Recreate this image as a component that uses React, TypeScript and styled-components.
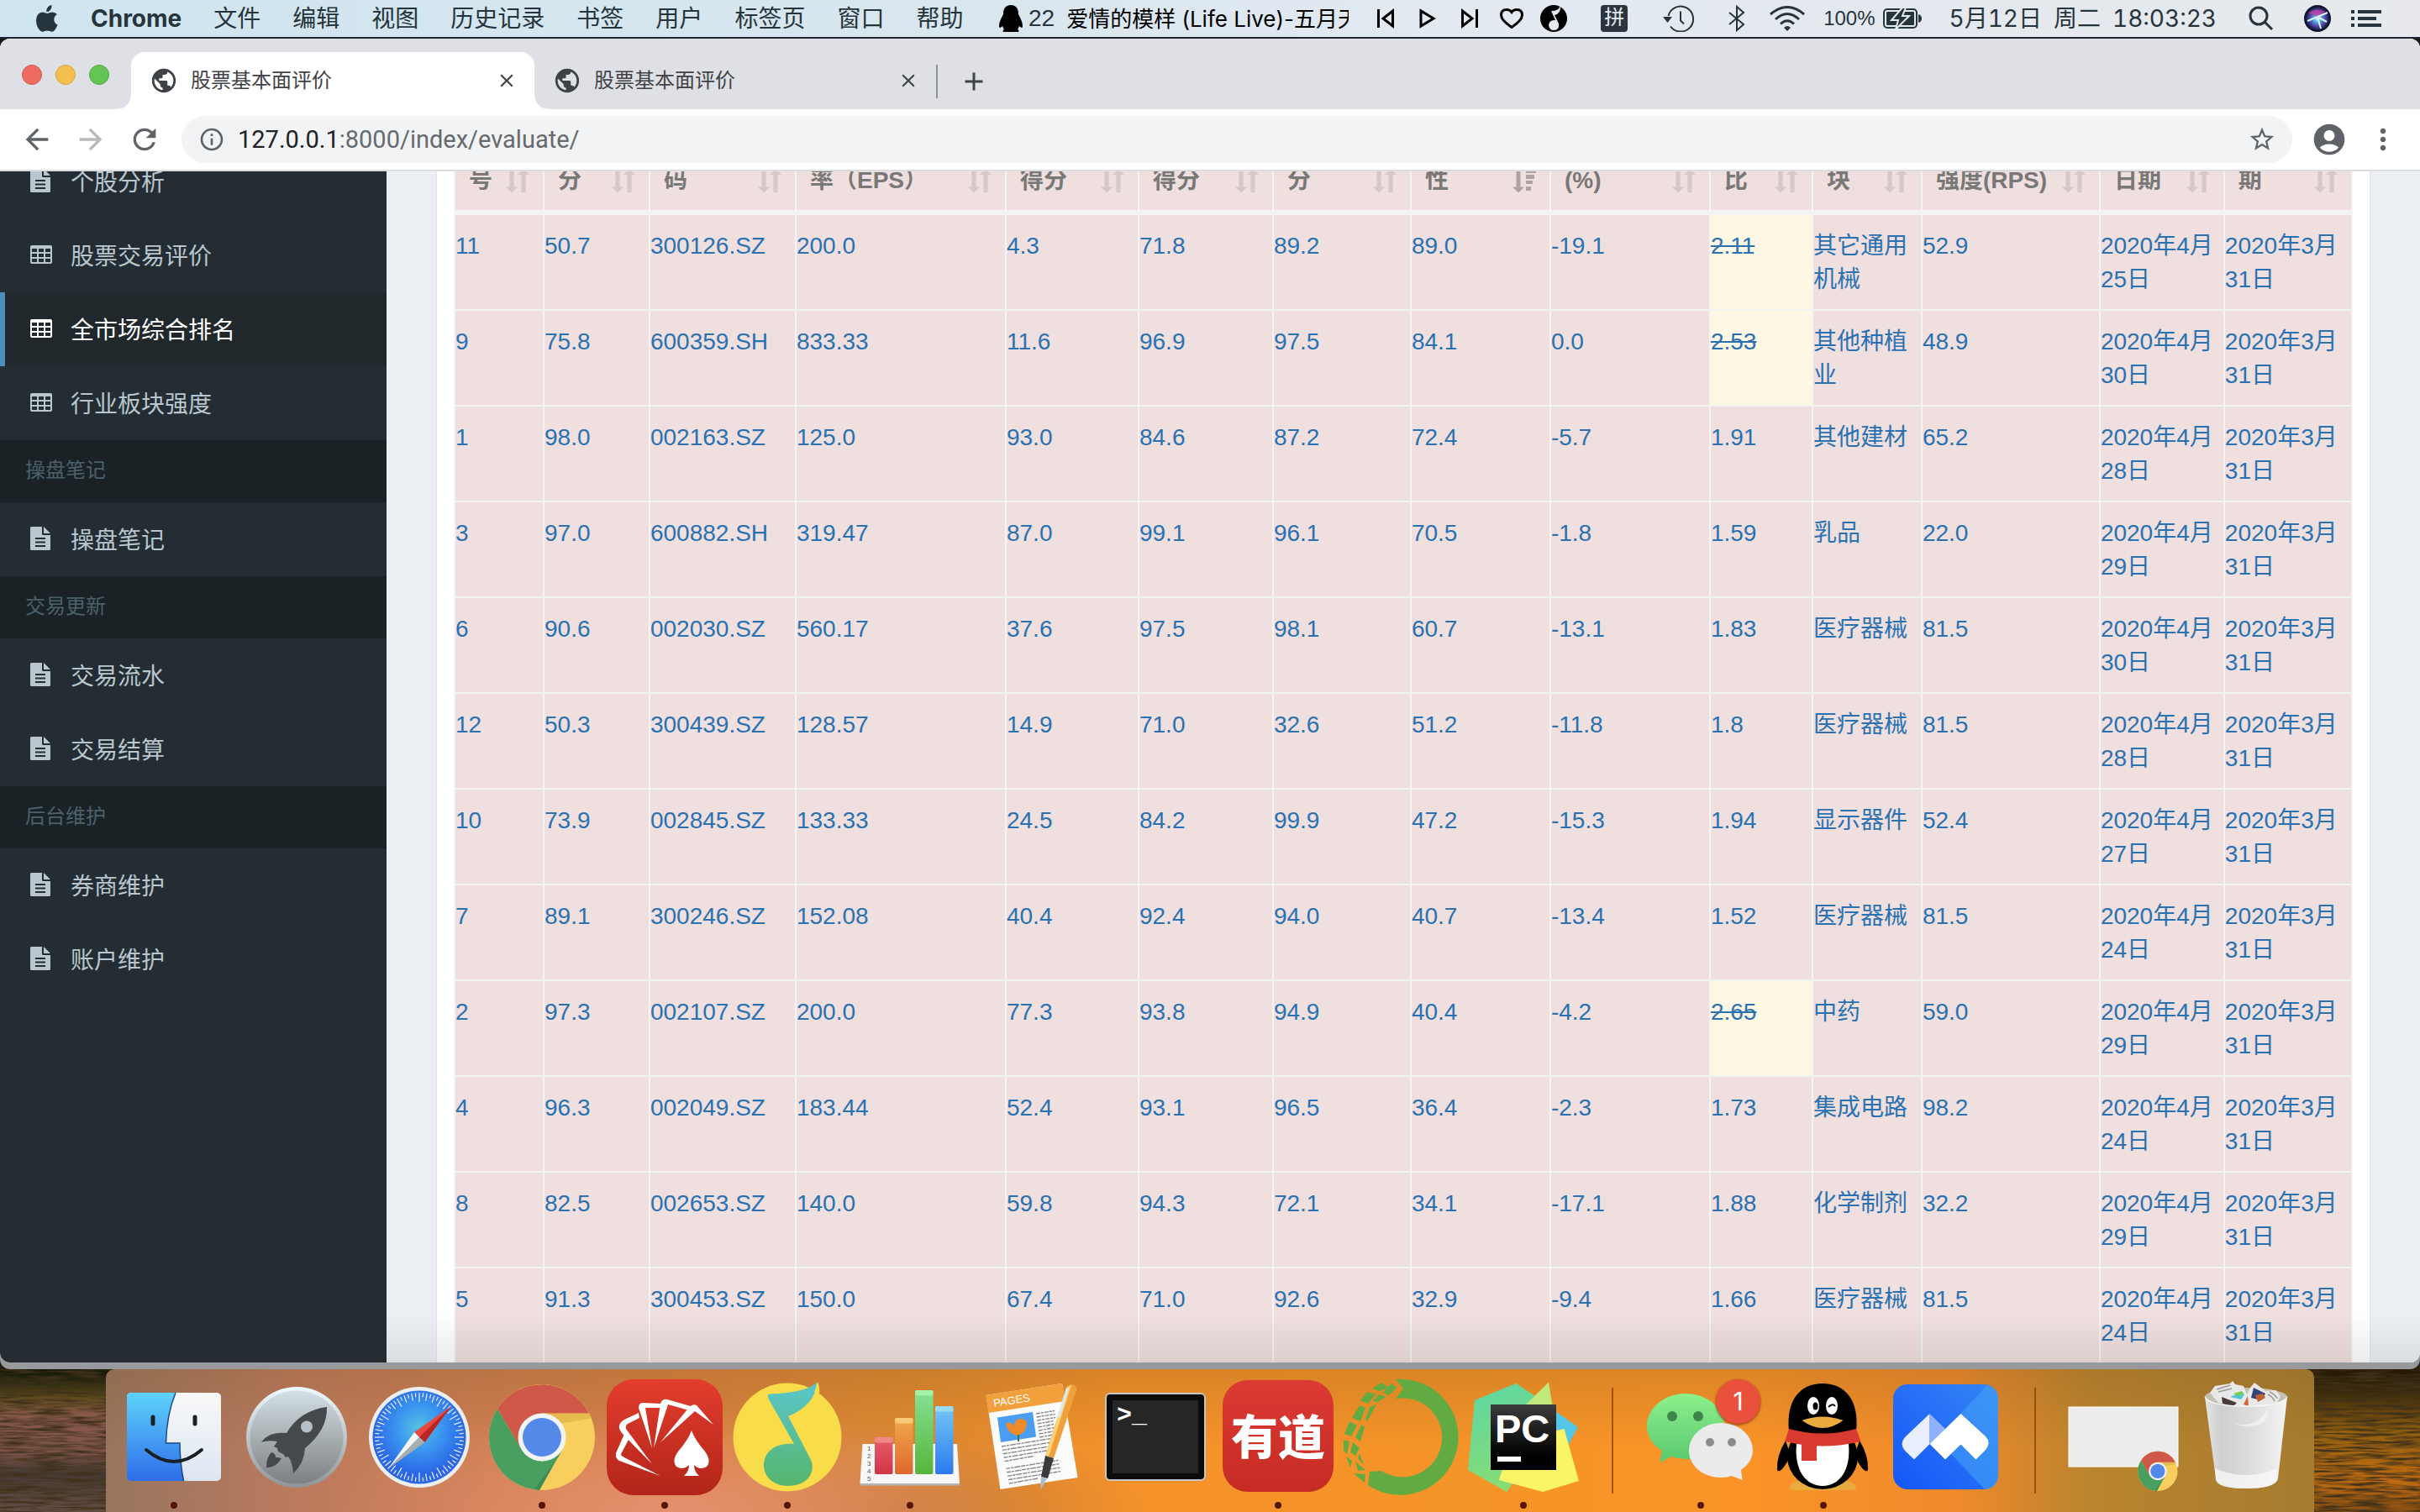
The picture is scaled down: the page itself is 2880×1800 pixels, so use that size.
import React from 'react';
import styled, { createGlobalStyle } from 'styled-components';
import {
  MdAccountCircle,
  MdAdd,
  MdArrowBack,
  MdArrowForward,
  MdClose,
  MdInfoOutline,
  MdMoreVert,
  MdPublic,
  MdRefresh,
  MdStarBorder,
} from 'react-icons/md';

const uiFont = `Inter, 'Noto Sans CJK SC', sans-serif`;
const pageFont = `'Liberation Sans', 'Noto Sans CJK SC', sans-serif`;

const GlobalStyle = createGlobalStyle`
  *, *::before, *::after { box-sizing: border-box; }
  body { margin: 0; font-family: ${pageFont}; }
  button { border: 0; padding: 0; background: none; font: inherit; color: inherit; }
  a { color: inherit; text-decoration: none; }
  svg { display: block; flex: none; }
`;

/* ---------- desktop ---------- */

const Desktop = styled.div`
  position: relative;
  display: flex;
  flex-direction: column;
  height: 100vh;
  overflow: hidden;
  background: #1d1712;
`;

const Wallpaper = styled.svg`
  position: absolute;
  inset: auto 0 0 0;
  width: 100%;
  height: 190px;
`;

/* ---------- menu bar ---------- */

const MenuBar = styled.header`
  position: relative;
  display: flex;
  align-items: center;
  flex: none;
  height: 46px;
  padding: 0 46px 0 42px;
  border-bottom: 2px solid #1c2530;
  background: linear-gradient(90deg, #cfe5ef, #d9e6ee 40%, #e2e9f1 60%, #e7e9ec);
  color: #26343c;
  font: 28px/44px ${uiFont};
  white-space: nowrap;
`;

const MenuList = styled.nav`
  display: flex;
  align-items: center;
  gap: 38px;
`;

const AppName = styled.button`
  font-weight: 700;
`;

const StatusArea = styled.div`
  display: flex;
  align-items: center;
  margin-left: auto;
`;

const StatusItem = styled.div<{ $gap: number }>`
  display: flex;
  align-items: center;
  margin-left: ${(p) => p.$gap}px;
`;

const SongTitle = styled.div`
  width: 336px;
  margin-left: 14px;
  padding-top: 2px;
  overflow: hidden;
  color: #000;
  font-size: 26px;
`;

const Count = styled.span`
  margin-left: 7px;
  font-family: ${pageFont};
`;

const Percent = styled.span`
  font-size: 24px;
  font-family: ${pageFont};
`;

const InputMethod = styled.span`
  width: 32px;
  height: 32px;
  border-radius: 4px;
  background: #2c343d;
  color: #e6ebf2;
  font-size: 24px;
  line-height: 30px;
  text-align: center;
`;

const Clock = styled.time`
  display: flex;
  gap: 14px;
  margin-left: 33px;
  font-variant-numeric: tabular-nums;
`;

/* ---------- browser window ---------- */

const WindowStack = styled.div`
  position: relative;
  display: flex;
  flex: 1;
  min-height: 0;
  padding-bottom: 8px;
  border-radius: 12px;
  background: #97999c;
`;

const BrowserWindow = styled.main`
  display: flex;
  flex-direction: column;
  flex: 1;
  min-width: 0;
  overflow: hidden;
  border-radius: 12px;
  background: #fff;
`;

const TabStrip = styled.div`
  display: flex;
  align-items: flex-end;
  flex: none;
  height: 84px;
  background: #dfe0e5;
`;

const TrafficLights = styled.div`
  display: flex;
  align-items: center;
  gap: 16px;
  width: 156px;
  height: 82px;
  padding-left: 26px;
`;

const Light = styled.button<{ $color: string; $edge: string }>`
  width: 24px;
  height: 24px;
  border: 1px solid ${(p) => p.$edge};
  border-radius: 50%;
  background: ${(p) => p.$color};
`;

const Tab = styled.div<{ $active?: boolean }>`
  position: relative;
  display: flex;
  align-items: center;
  width: ${(p) => (p.$active ? 480 : 478)}px;
  height: 68px;
  padding: 0 20px 0 22px;
  border-radius: 16px 16px 0 0;
  background: ${(p) => (p.$active ? '#fff' : 'transparent')};
  color: #3f4246;
  font: 24px/36px ${uiFont};

  &::before,
  &::after {
    content: ${(p) => (p.$active ? "''" : 'none')};
    position: absolute;
    bottom: 0;
    width: 16px;
    height: 16px;
  }
  &::before {
    right: 100%;
    background: radial-gradient(circle at 0 0, transparent 15px, #fff 16px);
  }
  &::after {
    left: 100%;
    background: radial-gradient(circle at 100% 0, transparent 15px, #fff 16px);
  }
`;

const TabTitle = styled.span`
  flex: 1;
  margin-left: 15px;
`;

const NewTab = styled.button`
  display: flex;
  align-items: center;
  height: 40px;
  margin-bottom: 13px;
  padding-left: 25px;
  border-left: 2px solid #8d9096;
  color: #3f4246;
`;

const Toolbar = styled.div`
  display: flex;
  align-items: center;
  flex: none;
  height: 74px;
  padding: 0 24px;
  border-bottom: 2px solid #dadce0;
  color: #5f6368;
`;

const ToolGroup = styled.div<{ $gap: number }>`
  display: flex;
  align-items: center;
  gap: ${(p) => p.$gap}px;
`;

const ToolButton = styled.button<{ $dim?: boolean }>`
  opacity: ${(p) => (p.$dim ? 0.45 : 1)};
`;

const Omnibox = styled.div`
  display: flex;
  align-items: center;
  flex: 1;
  height: 56px;
  margin: 0 22px 0 24px;
  padding: 0 19px 0 20px;
  border-radius: 28px;
  background: #f1f3f4;
`;

const Address = styled.a`
  flex: 1;
  margin-left: 15px;
  color: #66696d;
  font: 29px/40px Roboto, sans-serif;

  b {
    color: #202124;
    font-weight: 400;
  }
`;

const Page = styled.div`
  position: relative;
  display: flex;
  flex: 1;
  min-height: 0;
  overflow: hidden;
  background: #ecf0f5;

  &::after {
    content: '';
    position: absolute;
    inset: auto 0 0 0;
    height: 60px;
    background: linear-gradient(transparent, rgba(40, 35, 35, 0.09));
    pointer-events: none;
  }
`;

/* ---------- page sidebar ---------- */

const Sidebar = styled.aside`
  flex: none;
  width: 460px;
  background: #242d33;
`;

const SideNav = styled.nav`
  margin-top: -32px;
`;

const SideHeader = styled.div`
  padding: 16px 30px 18px;
  background: #1b2225;
  color: #4b616b;
  font-size: 24px;
  line-height: 40px;
`;

const SideLink = styled.a<{ $active?: boolean }>`
  display: flex;
  align-items: center;
  height: 88px;
  padding: 0 0 2px 30px;
  border-left: 6px solid ${(p) => (p.$active ? '#4b8fbd' : 'transparent')};
  background: ${(p) => (p.$active ? '#20282b' : 'transparent')};
  color: ${(p) => (p.$active ? '#fff' : '#b9c6cd')};
  font-size: 28px;
`;

const SideIcon = styled.span`
  width: 48px;
`;

/* ---------- ranking table ---------- */

const Content = styled.section`
  flex: 1;
  min-width: 0;
  padding: 0 60px;
`;

const Box = styled.div`
  padding: 0 20px;
  background: #fff;
  box-shadow: 0 0 2px rgba(0, 0, 0, 0.14);
`;

const Table = styled.table`
  width: 100%;
  margin-top: -10px;
  table-layout: fixed;
  border-spacing: 0;
  border-right: 2px solid #f4f4f4;
  font-size: 28px;
  line-height: 40px;
`;

const HeadCell = styled.th`
  padding: 1px 16px 15px;
  border-left: 2px solid #f4f4f4;
  border-bottom: 6px solid #f4f4f4;
  background: #efdfdf;
  color: #787876;
  text-align: left;
  white-space: nowrap;
`;

const HeadLabel = styled.div`
  display: flex;
  align-items: center;
  justify-content: space-between;
  height: 40px;
`;

const Cell = styled.td<{ $warn?: boolean }>`
  padding: 17px 0 15px;
  border-left: 2px solid #f4f4f4;
  border-bottom: 2px solid #f4f4f4;
  background: ${(p) => (p.$warn ? '#fdf7e4' : '#efdfdf')};
  color: #2a71b2;
  vertical-align: top;
`;

/* ---------- dock ---------- */

const DockArea = styled.footer`
  position: relative;
  display: flex;
  justify-content: center;
  flex: none;
  height: 170px;
`;

const DockShelf = styled.div`
  display: flex;
  padding: 0 8px;
  border-radius: 10px 10px 0 0;
  background:
    linear-gradient(rgba(120, 80, 30, 0.22), transparent 55%),
    radial-gradient(ellipse 420px 130px at 26% 100%, rgba(232, 146, 120, 0.85), transparent),
    radial-gradient(ellipse 300px 110px at 36% 100%, rgba(190, 120, 60, 0.7), transparent),
    linear-gradient(90deg, #98755f 0%, #bd7a5e 9%, #cf7f50 18%, #d9823e 27%, #e08a30 36%, #f5922a 46%, #f59428 62%, #fa9428 74%, #ee8a2c 84%, #b9842e 90%, #a67c30 100%);
`;

const DockItem = styled.button`
  position: relative;
  width: 146px;
  height: 170px;
`;

const RunningDot = styled.i`
  position: absolute;
  left: 69px;
  bottom: 4px;
  width: 8px;
  height: 8px;
  border-radius: 50%;
  background: #581404;
`;

const Badge = styled.span`
  position: absolute;
  top: 12px;
  left: 91px;
  width: 53px;
  height: 53px;
  border-radius: 50%;
  background: #e9513d;
  box-shadow: 0 1px 3px rgba(80, 20, 0, 0.7);
  color: #fff;
  font: 30px/53px ${uiFont};
  text-align: center;
`;

const DockDivider = styled.div`
  width: 2px;
  height: 126px;
  margin: 22px 31px 0 32px;
  background: rgba(140, 60, 0, 0.75);
`;

/* ---------- small drawings ---------- */

const FileIcon = () => (
  <svg width="24" height="28" viewBox="0 0 24 28" fill="currentColor">
    <path
      fillRule="evenodd"
      d="M1.500 0H14v8.500q0 1.500 1.500 1.500H24v16.500q0 1.500-1.500 1.500h-21Q0 28 0 26.500v-25Q0 0 1.500 0zM6 13v2h12v-2zM6 17.500v2h12v-2zM6 22v2h12v-2z"
    />
    <path d="M16 0l8 8h-8z" />
  </svg>
);

const GridIcon = () => (
  <svg width="26" height="22" viewBox="0 0 26 22" fill="currentColor">
    <path
      fillRule="evenodd"
      d="M2 0h22q2 0 2 2v18q0 2-2 2H2q-2 0-2-2V2Q0 0 2 0zM2 4v4h6V4zM10 4v4h6V4zM18 4v4h6V4zM2 10v4h6v-4zM10 10v4h6v-4zM18 10v4h6v-4zM2 16v4h6v-4zM10 16v4h6v-4zM18 16v4h6v-4z"
    />
  </svg>
);

const SortIcon = ({ active }: { active?: boolean }) => (
  <svg width="28" height="28" viewBox="0 0 28 28" fill="#333" opacity={active ? 0.34 : 0.13}>
    <path d="M4.500 0h5v21.500H14L7 28.500 0 21.500h4.500z" />
    {active ? (
      <path d="M16 1h13v4H16zM16 7h10v5H16zM16 14h8v4h-8zM16 21h6v5h-6z" />
    ) : (
      <path d="M18.500 28h5V7H28L21 0l-7 7h4.500z" />
    )}
  </svg>
);

/* ---------- dock drawings ---------- */

const Art = ({ children }: { children: React.ReactNode }) => (
  <svg width="146" height="170" viewBox="0 0 146 170">
    {children}
  </svg>
);

const ChromeShape = () => (
  <>
    <circle cx="73" cy="81" r="63" fill="#f8cf5e" />
    <path d="M20 47L48.500 95 73 110 97.500 95 70 144A63 63 0 0 1 20 47z" fill="#489f60" />
    <path d="M20 47L48.500 95 73 81V52.500H129A63 63 0 0 0 20 47z" fill="#cf5849" />
    <path d="M97 95L70 144l-6-1 29-39z" fill="#2e7a44" opacity=".5" />
    <path d="M73 52.500h56l2 6-35 6z" fill="#c59530" opacity=".35" />
    <circle cx="73" cy="81" r="28.500" fill="#f3f3f3" />
    <circle cx="73" cy="81" r="23" fill="#5489ea" />
  </>
);

const Finder = () => (
  <Art>
    <defs>
      <linearGradient id="fnA" x2="0" y2="1"><stop stopColor="#5ed3fa" /><stop offset="1" stopColor="#2f6dea" /></linearGradient>
      <linearGradient id="fnB" x2="0" y2="1"><stop stopColor="#f8f8f8" /><stop offset="1" stopColor="#dce6f2" /></linearGradient>
    </defs>
    <rect x="17" y="28" width="112" height="105" rx="5" fill="url(#fnB)" />
    <path d="M22 28H75C68 45 64 66 63.500 88H80C80 108 82 120 84.500 133H22q-5 0-5-5V33q0-5 5-5z" fill="url(#fnA)" />
    <path d="M75 28C68 45 64 66 63.500 88H80C80 108 82 120 84.500 133" fill="none" stroke="#1b4a80" strokeWidth="1.500" />
    <path d="M48 57v8M98 57v8" stroke="#1a2226" strokeWidth="5" strokeLinecap="round" />
    <path d="M40 96Q73 124 106 96" fill="none" stroke="#182026" strokeWidth="4" strokeLinecap="round" />
  </Art>
);

const Launchpad = () => (
  <Art>
    <defs>
      <linearGradient id="lp" x2="0" y2="1"><stop stopColor="#d3e0e5" /><stop offset="1" stopColor="#7d7f80" /></linearGradient>
      <linearGradient id="lpR" x2="0" y2="1"><stop stopColor="#eefaff" /><stop offset="1" stopColor="#8f9496" /></linearGradient>
    </defs>
    <circle cx="73" cy="81" r="60" fill="url(#lpR)" />
    <circle cx="73" cy="81" r="55.500" fill="url(#lp)" />
    <path d="M109 45Q110 72 83 94 82 112 69 124 68 110 63 104L60 105 57 101 51 98 50 94 46 92 50 86Q40 84 31 87 40 74 61 76 77 49 109 45z" fill="#45494b" />
    <path d="M43 99Q48 100 48 105 52 105 55 106 48 118 37 117 37 105 43 99z" fill="#45494b" />
    <circle cx="85" cy="68.500" r="7" fill="#b4c0c5" />
  </Art>
);

const Safari = () => (
  <Art>
    <defs>
      <radialGradient id="sf" cy=".4"><stop stopColor="#55c2e0" /><stop offset=".5" stopColor="#3a94f0" /><stop offset="1" stopColor="#2a66e6" /></radialGradient>
    </defs>
    <circle cx="73" cy="81" r="60" fill="#eceeef" />
    <circle cx="73" cy="81" r="55.500" fill="url(#sf)" />
    {Array.from({ length: 72 }, (_, i) => (
      <path
        key={i}
        d={i % 6 === 0 ? 'M73 28v11' : i % 2 === 0 ? 'M73 28v9' : 'M73 28v5'}
        stroke="#dfeaf8"
        strokeWidth="1.300"
        transform={`rotate(${i * 5} 73 81)`}
      />
    ))}
    <path d="M111 44L79.500 87 67 75z" fill="#e8483f" />
    <path d="M111 44L79.500 87 73 81z" fill="#b92820" />
    <path d="M36 118.500L67 75 73 81z" fill="#f5f5f5" />
    <path d="M36 118.500L79.500 87 73 81z" fill="#a9adb0" />
  </Art>
);

const Chrome = () => (
  <Art>
    <ChromeShape />
  </Art>
);

const Cards = () => (
  <Art>
    <defs>
      <linearGradient id="cd" x2="0" y2="1"><stop stopColor="#e33d2e" /><stop offset="1" stopColor="#b12518" /></linearGradient>
    </defs>
    <rect x="4" y="12" width="138" height="138" rx="32" fill="url(#cd)" />
    <g fill="#fff">
      <path d="M68 127L19 109Q14 106 15 100L25 77 30 84 21 101Q21 103 23 104z" />
      <path d="M58 113L23 77Q18 71 19 67 20 63 25 60L42 52 43 58 29 65Q26 67 27 71z" />
      <path d="M58 94L42 46Q42 41 46 40L69 41V46H50z" />
      <path d="M60 94L68 41Q70 35 76 36L104 44 102 49 77 42z" />
      <path d="M68 87L99 49Q105 40 111 43L131 66 109 50z" />
    </g>
    <path d="M105 73Q109 84 121 98 129 109 123 116 115 121 108 114 108 122 114 127H96Q102 122 102 114 95 121 87 116 81 109 89 98 101 84 105 73z" fill="#fff" />
  </Art>
);

const Music = () => (
  <Art>
    <defs>
      <linearGradient id="ms" x2="0" y2="1"><stop stopColor="#5ac6cb" /><stop offset="1" stopColor="#56b66e" /></linearGradient>
    </defs>
    <circle cx="73" cy="81" r="64.500" fill="#f9dc49" />
    <path d="M109 15Q96 28 52 29.500 48 30 51 36L81 89Q74 88 66 90C36 96 38 138 73 139C98 139 107 122 101 108L74 56Q106 43 109 15z" fill="url(#ms)" />
    <path d="M109 15Q112 22 111 29L105 28z" fill="#f9dc49" />
  </Art>
);

const bars: Array<[number, number, string, string, string]> = [
  [31, 81, '#e8606a', '#cf3347', '#ef8a88'],
  [55, 58, '#f0a94c', '#e0672d', '#f6c877'],
  [79, 25, '#86e294', '#56b53b', '#a6f0a8'],
  [103, 44, '#74c8f8', '#2d78ee', '#98dafa'],
];

const Numbers = () => (
  <Art>
    <path d="M16.500 89H129l3 47H13.500z" fill="#f7f7f7" />
    <path d="M13.500 136H132v2.500H13.500z" fill="#b5b5b5" />
    {[1, 2, 3, 4, 5].map((n) => (
      <text key={n} x="22" y={88 + n * 9} fontSize="8" fill="#555">{n}</text>
    ))}
    {bars.map(([x, y, from, to, cap]) => (
      <g key={x}>
        <defs>
          <linearGradient id={`bar${x}`} x2="0" y2="1"><stop stopColor={from} /><stop offset="1" stopColor={to} /></linearGradient>
        </defs>
        <rect x={x} y={y} width="21.500" height={125 - y} rx="2" fill={`url(#bar${x})`} />
        <rect x={x} y={y} width="21.500" height="6.500" rx="2" fill={cap} />
      </g>
    ))}
  </Art>
);

const Pages = () => (
  <Art>
    <path d="M17.500 31L108 17l18.500 112-92 14z" fill="#fbfbfb" />
    <path d="M17.500 31L108 17l3.500 21L20.500 52z" fill="#f2a03c" />
    <text x="27" y="45" fontSize="13" fill="#fff" fontFamily="Liberation Sans" transform="rotate(-9 27 45)">PAGES</text>
    <path d="M31 57.500L73 51l4 29.500L35 87z" fill="#4a9df0" />
    <path d="M41 65q6-4 9 3 2-10 10-9 6 2 6 4 0 12-9 15-3 1-6 0-8-3-10-13z" fill="#f08a28" />
    <path d="M56 78v8" stroke="#3c7a34" strokeWidth="2" />
    {[0, 1, 2, 3, 4, 5, 6, 7].map((i) => (
      <path key={i} d={`M${77 + i * 0.6} ${53 + i * 4}l${i < 3 ? 22 : 19}-3.500`} stroke="#888" strokeWidth="1.400" strokeDasharray="5 1 3 1" />
    ))}
    {[0, 1, 2, 3, 4, 6, 7, 8, 9, 10].map((i) => (
      <path key={i} d={`M${36 + i * 0.9} ${92 + i * 4.4}l${i === 4 || i === 10 ? 34 : 62}-${i === 4 || i === 10 ? 6 : 10}`} stroke="#888" strokeWidth="1.400" strokeDasharray="5 1 3 1 7 1" />
    ))}
    <path d="M114 21Q117 16 122 19 126 21 125 25L98 106 88 103z" fill="#f0a03a" />
    <path d="M119 19L92 104 88 103 114 21z" fill="#fbd277" />
    <path d="M113 22l3 1-11 35-3-1z" fill="#dce8f2" />
    <path d="M88 103l10 3-7 24-8-2z" fill="#3b3b3d" />
    <path d="M83 128l7 2-8 14z" fill="#a8bfd0" />
  </Art>
);

const Terminal = () => (
  <Art>
    <rect x="13" y="28" width="120" height="105" rx="6" fill="#c4c6c8" />
    <rect x="15" y="30" width="116" height="101" rx="4" fill="#0c0c0c" />
    <rect x="22" y="37" width="102" height="87" fill="#262626" />
    <text x="27" y="63" fontSize="30" fontWeight="700" fill="#fff" fontFamily="Liberation Mono">&gt;_</text>
  </Art>
);

const Youdao = () => (
  <Art>
    <defs>
      <linearGradient id="yd" x2="0" y2="1"><stop stopColor="#dc3a33" /><stop offset="1" stopColor="#c52b24" /></linearGradient>
    </defs>
    <rect x="7" y="13" width="132" height="133" rx="30" fill="url(#yd)" />
    <text x="73" y="101" fontSize="56" fontWeight="900" fill="#fff" textAnchor="middle" fontFamily="Noto Sans CJK SC">有道</text>
  </Art>
);

const Anaconda = () => (
  <Art>
    <path d="M67 12A69 69 0 1 1 34 138L36 122 50 121A47 47 0 1 0 67 35L76 23z" fill="#62ab42" />
    <path
      fill="#62ab42"
      d="M50 16L59 22 47 26 39 23zM62 17L68 22 59 31 52 28zM33 27L43 30 34 41 25 37zM47 30L56 33 45 39 40 38zM24 43L31 46 25 62 15 58zM36 45L44 42 33 62 31 60zM12 62L21 67 14 80 6 77zM26 67L30 68 25 86 19 81zM5 84L12 86 9 101 5 97zM16 87L24 94 19 103 13 99zM24 100L29 114 22 106zM8 104L15 109 13 117zM19 110L31 120 22 121zM17 124L31 125 30 135z"
    />
  </Art>
);

const PyCharm = () => (
  <Art>
    <defs>
      <linearGradient id="pc" x2=".3" y2="1"><stop stopColor="#5cd6a4" /><stop offset="1" stopColor="#86dd76" /></linearGradient>
      <linearGradient id="pk" x2="0" y2="1"><stop stopColor="#3c3c3c" /><stop offset=".8" stopColor="#000" /></linearGradient>
    </defs>
    <path d="M64 17L138 69 122 98 96 90z" fill="#55c6e8" />
    <path d="M15 37L64 17 90 34 100 80 53 146 7 120z" fill="url(#pc)" />
    <path d="M103 15.500L108 46H72z" fill="#bfe97a" />
    <path d="M121.500 71L139 133 96 146 44 132 50 112 108 74z" fill="#faf468" />
    <rect x="34" y="42" width="78" height="78" fill="url(#pk)" />
    <text x="39" y="87" fontSize="47" fontWeight="700" fill="#fff" fontFamily="Liberation Sans">PC</text>
    <rect x="42" y="104" width="28" height="6" fill="#fff" />
  </Art>
);

const WeChat = () => (
  <Art>
    <defs>
      <linearGradient id="wc" x2="0" y2="1"><stop stopColor="#8df08c" /><stop offset="1" stopColor="#5bc870" /></linearGradient>
    </defs>
    <path d="M55 29C80 29 101 46 101 68S80 107 55 107Q46 107 38 104L24 111 27 97Q9 86 9 68C9 46 30 29 55 29z" fill="url(#wc)" />
    <circle cx="39" cy="56" r="6" fill="#3d8549" />
    <circle cx="70" cy="56" r="6" fill="#3d8549" />
    <path d="M97 64C118 64 135 78 135 97Q135 110 121 120L122.500 132 110 127Q104 129 97 129C76 129 59 115 59 97S76 64 97 64z" fill="#ebebeb" />
    <circle cx="84" cy="87" r="5" fill="#8b8b8b" />
    <circle cx="110" cy="87" r="5" fill="#8b8b8b" />
  </Art>
);

const QQ = () => (
  <Art>
    <path d="M32 142Q33 132 52 132H92Q111 132 112 142 112 144 100 144H44Q32 144 32 142z" fill="#eaab3e" />
    <path d="M28 85Q17 103 18 120 22 126 34 103zM116 85Q127 103 126 120 122 126 110 103z" fill="#000" />
    <ellipse cx="72" cy="104" rx="42" ry="39" fill="#000" />
    <path d="M32 74C28 36 46 17 72 17s44 19 40 57z" fill="#000" />
    <path d="M41 89H103C106 120 92 139 72 139S38 120 41 89z" fill="#fff" />
    <path d="M32 71Q72 82 112 71L117.500 86Q72 97 27 86z" fill="#d83a30" />
    <path d="M47 88H65V109H47z" fill="#d83a30" />
    <ellipse cx="61" cy="43.500" rx="7" ry="10.500" fill="#fff" />
    <ellipse cx="83" cy="43.500" rx="7" ry="10.500" fill="#fff" />
    <ellipse cx="63.500" cy="44" rx="3" ry="4.500" fill="#000" />
    <path d="M79 45q5-5 8-1" fill="none" stroke="#000" strokeWidth="2" />
    <path d="M47.500 61Q72 52 96.500 61 84 70 72 70T47.500 61z" fill="#eaab3e" />
  </Art>
);

const Meeting = () => (
  <Art>
    <defs>
      <linearGradient id="mt" x1="0" y1="1" x2="1" y2="0"><stop stopColor="#1456f8" /><stop offset="1" stopColor="#3585f5" /></linearGradient>
    </defs>
    <rect x="10" y="18" width="125" height="125" rx="17" fill="url(#mt)" />
    <path d="M122 19q13 3 13 17v90q0 16-16 17L70 92 90 53z" fill="#46a4f5" opacity=".55" />
    <path d="M53.500 53V89L35 107.500 24 97Q17 89 24 81z" fill="#e8eefd" />
    <path d="M53.500 53L72 71 53.500 89z" fill="#8fb0fa" />
    <path d="M90.500 53L120 80Q127 87 120 96L108.500 107.500 90.500 89.500 72 107.500 53.500 89z" fill="#fff" />
  </Art>
);

const MinimizedWindow = () => (
  <Art>
    <rect x="8" y="45" width="130" height="71" fill="#ececec" stroke="#fff" />
    <g transform="translate(86.500 91) scale(.375)">
      <ChromeShape />
    </g>
  </Art>
);

const Trash = () => (
  <Art>
    <defs>
      <linearGradient id="ts"><stop stopColor="#e6e6e6" /><stop offset=".2" stopColor="#cfcfcf" /><stop offset=".6" stopColor="#dedede" /><stop offset="1" stopColor="#f4f4f4" /></linearGradient>
    </defs>
    <ellipse cx="73" cy="33" rx="49" ry="11" fill="#c5c0b4" />
    <path d="M30 28L36 20 54 17 57 14 60 18 70 20 74 30 78 22 83 16 96 26 108 25 114 32 110 40 88 44 60 43 40 40z" fill="#e8e8e6" />
    <path d="M54 33l14-6 3 3-4 6z" fill="#57c4d8" />
    <path d="M58 29l10-3 2 3-6 3z" fill="#72d04a" />
    <path d="M82 22l14 7-5 8-12-3z" fill="#34437c" />
    <path d="M84 31l9-2 3 5-9 5z" fill="#c3622e" />
    <path d="M44 33l18 7-4 4-13-3z" fill="#4a3a38" />
    <path d="M38 24l16-5M40 27l16-4M99 30q5 2 8 8M101 27q7 3 9 8" stroke="#999" strokeWidth="1.500" fill="none" />
    <path d="M70 42l5-10 1 12z" fill="#d8623c" />
    <path d="M24 33Q30 44 73 44T122 33L111 130Q109 142 73 142T37 130z" fill="url(#ts)" />
    <path d="M24 33Q30 44 73 44T122 33" fill="none" stroke="#fafafa" strokeWidth="1.500" />
    <path d="M58 64Q84 72 98 48 102 62 86 67 70 70 58 64z" fill="#f2f2f2" opacity=".8" />
    <path d="M36 118Q73 134 110 118L109 132Q106 142 73 142T37 132z" fill="#fafafa" opacity=".75" />
  </Art>
);

type DockApp = { name: string; art: React.ComponentType; running?: boolean; badge?: number };

const dockApps: DockApp[] = [
  { name: 'Finder', art: Finder, running: true },
  { name: 'Launchpad', art: Launchpad },
  { name: 'Safari', art: Safari },
  { name: 'Chrome', art: Chrome, running: true },
  { name: 'Cards', art: Cards, running: true },
  { name: 'Music', art: Music, running: true },
  { name: 'Numbers', art: Numbers, running: true },
  { name: 'Pages', art: Pages },
  { name: 'Terminal', art: Terminal },
  { name: 'Youdao', art: Youdao, running: true },
  { name: 'Anaconda', art: Anaconda },
  { name: 'PyCharm', art: PyCharm, running: true },
];
const recentApps: DockApp[] = [
  { name: 'WeChat', art: WeChat, running: true, badge: 1 },
  { name: 'QQ', art: QQ, running: true },
  { name: 'Meeting', art: Meeting },
];
const dockEnd: DockApp[] = [
  { name: 'Minimized window', art: MinimizedWindow },
  { name: 'Trash', art: Trash },
];

const DockGroup = ({ apps }: { apps: DockApp[] }) => (
  <>
    {apps.map(({ name, art: Drawing, running, badge }) => (
      <DockItem key={name} aria-label={name}>
        <Drawing />
        {badge && <Badge>{badge}</Badge>}
        {running && <RunningDot />}
      </DockItem>
    ))}
  </>
);

/* ---------- data ---------- */

const menus = ['文件', '编辑', '视图', '历史记录', '书签', '用户', '标签页', '窗口', '帮助'];

type NavEntry = { label: string; kind: 'header' | 'file' | 'grid'; active?: boolean };

const navEntries: NavEntry[] = [
  { label: '个股分析', kind: 'file' },
  { label: '股票交易评价', kind: 'grid' },
  { label: '全市场综合排名', kind: 'grid', active: true },
  { label: '行业板块强度', kind: 'grid' },
  { label: '操盘笔记', kind: 'header' },
  { label: '操盘笔记', kind: 'file' },
  { label: '交易更新', kind: 'header' },
  { label: '交易流水', kind: 'file' },
  { label: '交易结算', kind: 'file' },
  { label: '后台维护', kind: 'header' },
  { label: '券商维护', kind: 'file' },
  { label: '账户维护', kind: 'file' },
];

const columns: Array<[string, number]> = [
  ['号', 106],
  ['分', 126],
  ['码', 174],
  ['率（EPS）', 250],
  ['得分', 158],
  ['得分', 160],
  ['分', 164],
  ['性', 166],
  ['(%)', 190],
  ['比', 122],
  ['块', 130],
  ['强度(RPS)', 212],
  ['日期', 148],
  ['期', 152],
];
const TOTAL_WIDTH = columns.reduce((sum, [, width]) => sum + width, 0);
const SORTED_COLUMN = 7;
const RATIO_COLUMN = 9;

const rows: string[][] = [
  ['11', '50.7', '300126.SZ', '200.0', '4.3', '71.8', '89.2', '89.0', '-19.1', '2.11', '其它通用机械', '52.9', '2020年4月25日', '2020年3月31日'],
  ['9', '75.8', '600359.SH', '833.33', '11.6', '96.9', '97.5', '84.1', '0.0', '2.53', '其他种植业', '48.9', '2020年4月30日', '2020年3月31日'],
  ['1', '98.0', '002163.SZ', '125.0', '93.0', '84.6', '87.2', '72.4', '-5.7', '1.91', '其他建材', '65.2', '2020年4月28日', '2020年3月31日'],
  ['3', '97.0', '600882.SH', '319.47', '87.0', '99.1', '96.1', '70.5', '-1.8', '1.59', '乳品', '22.0', '2020年4月29日', '2020年3月31日'],
  ['6', '90.6', '002030.SZ', '560.17', '37.6', '97.5', '98.1', '60.7', '-13.1', '1.83', '医疗器械', '81.5', '2020年4月30日', '2020年3月31日'],
  ['12', '50.3', '300439.SZ', '128.57', '14.9', '71.0', '32.6', '51.2', '-11.8', '1.8', '医疗器械', '81.5', '2020年4月28日', '2020年3月31日'],
  ['10', '73.9', '002845.SZ', '133.33', '24.5', '84.2', '99.9', '47.2', '-15.3', '1.94', '显示器件', '52.4', '2020年4月27日', '2020年3月31日'],
  ['7', '89.1', '300246.SZ', '152.08', '40.4', '92.4', '94.0', '40.7', '-13.4', '1.52', '医疗器械', '81.5', '2020年4月24日', '2020年3月31日'],
  ['2', '97.3', '002107.SZ', '200.0', '77.3', '93.8', '94.9', '40.4', '-4.2', '2.65', '中药', '59.0', '2020年4月29日', '2020年3月31日'],
  ['4', '96.3', '002049.SZ', '183.44', '52.4', '93.1', '96.5', '36.4', '-2.3', '1.73', '集成电路', '98.2', '2020年4月24日', '2020年3月31日'],
  ['8', '82.5', '002653.SZ', '140.0', '59.8', '94.3', '72.1', '34.1', '-17.1', '1.88', '化学制剂', '32.2', '2020年4月29日', '2020年3月31日'],
  ['5', '91.3', '300453.SZ', '150.0', '67.4', '71.0', '92.6', '32.9', '-9.4', '1.66', '医疗器械', '81.5', '2020年4月24日', '2020年3月31日'],
];

/* ---------- assembled parts ---------- */

const SystemBar = () => (
  <MenuBar>
    <MenuList>
      <svg width="28" height="32" viewBox="0 0 28 32" fill="currentColor">
        <path d="M19.500 0q.5 3.500-1.600 5.900-2 2.300-4.700 2.200-.3-3 1.700-5.500Q16.800.3 19.500 0zM26 11q-3.700 2.400-3.700 6.300 0 4.500 4.200 6.300-1 3-2.900 5.600-1.800 2.600-3.900 2.600-1 0-2.600-.7t-3-.7q-1.300 0-2.900.7T8.800 32q-2.300 0-4.300-2.900Q1 24.300 1 18.200q0-4.600 2.300-7.200T8.700 8.500q1.300 0 3.100.8t2.400.8q.5 0 2.400-.8 2-.8 3.600-.8 3.700.1 5.800 2.500z" />
      </svg>
      <AppName>Chrome</AppName>
      {menus.map((m) => (
        <button key={m}>{m}</button>
      ))}
    </MenuList>
    <StatusArea>
      <svg width="28" height="32" viewBox="0 0 28 32" fill="#000">
        <path d="M14 0c7 0 9 5 9 11 2 4 5 9 5 14 0 3-2 2-4 0-1 2-1 3-2 4 2 1 2 3 0 3H6c-2 0-2-2 0-3-1-1-1-2-2-4-2 2-4 3-4 0 0-5 3-10 5-14C5 5 7 0 14 0z" />
      </svg>
      <Count>22</Count>
      <SongTitle>爱情的模样 (Life Live)-五月天</SongTitle>
      <StatusItem $gap={34}>
        <svg width="20" height="24" viewBox="0 0 20 24" fill="none" stroke="#000" strokeWidth="3">
          <path d="M1.500 1v22M18.500 3v18L7 12z" />
        </svg>
      </StatusItem>
      <StatusItem $gap={30}>
        <svg width="20" height="24" viewBox="0 0 20 24" fill="none" stroke="#000" strokeWidth="3">
          <path d="M2 3v18l15-9z" />
        </svg>
      </StatusItem>
      <StatusItem $gap={30}>
        <svg width="20" height="24" viewBox="0 0 20 24" fill="none" stroke="#000" strokeWidth="3">
          <path d="M18.500 1v22M1.500 3v18L13 12z" />
        </svg>
      </StatusItem>
      <StatusItem $gap={26}>
        <svg width="28" height="24" viewBox="0 0 28 24" fill="none" stroke="#000" strokeWidth="3">
          <path d="M14 22.500Q1.500 14 1.500 8 1.500 1.500 8 1.500 12 1.500 14 4.500 16 1.500 20 1.500 26.500 1.500 26.500 8 26.500 14 14 22.500z" />
        </svg>
      </StatusItem>
      <StatusItem $gap={20}>
        <svg width="32" height="32" viewBox="0 0 32 32">
          <circle cx="16" cy="16" r="16" fill="#000" />
          <path d="M24 1Q22 7 13 7L18 18Q11 17 10 24 11 30 16 30 23 30 22 22L17 12Q25 10 24 1z" fill="#e2e8f0" />
        </svg>
      </StatusItem>
      <StatusItem $gap={40}>
        <InputMethod>拼</InputMethod>
      </StatusItem>
      <StatusItem $gap={42}>
        <svg width="38" height="32" viewBox="0 0 38 32" fill="none" stroke="currentColor" strokeWidth="2">
          <path d="M6.500 13A15 15 0 1 1 9 25.500M21 7.500v11l4 4" />
          <path d="M0 14h11l-5.500 7z" fill="currentColor" stroke="none" />
        </svg>
      </StatusItem>
      <StatusItem $gap={40}>
        <svg width="20" height="32" viewBox="0 0 20 32" fill="none" stroke="currentColor" strokeWidth="2">
          <path d="M1 9l17 14-8 7V2l8 7L1 23" />
        </svg>
      </StatusItem>
      <StatusItem $gap={29}>
        <svg width="42" height="30" viewBox="0 0 42 30" fill="none" stroke="currentColor" strokeWidth="3">
          <path d="M1 10Q21-7 41 10M7 16Q21 3 35 16M13 21.500Q21 14 29 21.500" />
          <path d="M17 26Q21 22 25 26L21 30z" fill="currentColor" stroke="none" />
        </svg>
      </StatusItem>
      <StatusItem $gap={22}>
        <Percent>100%</Percent>
      </StatusItem>
      <StatusItem $gap={9}>
        <svg width="46" height="26" viewBox="0 0 46 26">
          <rect x="1" y="2" width="39" height="22" rx="4" fill="none" stroke="currentColor" strokeWidth="2" />
          <rect x="4" y="5" width="33" height="16" rx="1" fill="currentColor" />
          <path d="M42 8q4 1 4 5t-4 5z" fill="currentColor" />
          <path d="M23 0L10 15h8l-3 11L31 10h-8l4-10z" fill="currentColor" stroke="#e4e9ef" strokeWidth="2" />
        </svg>
      </StatusItem>
      <Clock>
        <span>5月12日</span>
        <span>周二</span>
        <span>18:03:23</span>
      </Clock>
      <StatusItem $gap={38}>
        <svg width="30" height="30" viewBox="0 0 30 30" fill="none" stroke="currentColor" strokeWidth="3">
          <circle cx="12" cy="12" r="10" />
          <path d="M19 19l9 9" />
        </svg>
      </StatusItem>
      <StatusItem $gap={36}>
        <svg width="32" height="32" viewBox="0 0 32 32">
          <defs>
            <radialGradient id="siri"><stop stopColor="#fff" /><stop offset=".3" stopColor="#4bb4e6" /><stop offset=".65" stopColor="#5a48b0" /><stop offset="1" stopColor="#131a3c" /></radialGradient>
          </defs>
          <circle cx="16" cy="16" r="16" fill="#10152e" />
          <circle cx="16" cy="16" r="14" fill="url(#siri)" />
          <path d="M5 10Q14 2 25 8 18 12 16 16 12 10 5 10z" fill="#c53f9c" opacity=".75" />
          <path d="M4 19L16 14 28 9M16 14l4 14M16 14l11 6" stroke="#d8f4ff" strokeWidth="2" fill="none" />
        </svg>
      </StatusItem>
      <StatusItem $gap={24}>
        <svg width="36" height="20" viewBox="0 0 36 20" fill="currentColor">
          <path d="M0 0h4v4H0zM8 0h28v4H8zM0 8h4v4H0zM8 8h22v4H8zM0 16h4v4H0zM8 16h28v4H8z" />
        </svg>
      </StatusItem>
    </StatusArea>
  </MenuBar>
);

const BrowserTab = ({ title, active }: { title: string; active?: boolean }) => (
  <Tab $active={active}>
    <MdPublic size={34} />
    <TabTitle>{title}</TabTitle>
    <button aria-label="关闭">
      <MdClose size={26} />
    </button>
  </Tab>
);

const SidebarMenu = () => (
  <Sidebar>
    <SideNav>
      {navEntries.map((e, i) =>
        e.kind === 'header' ? (
          <SideHeader key={i}>{e.label}</SideHeader>
        ) : (
          <SideLink key={i} href="#" $active={e.active}>
            <SideIcon>{e.kind === 'file' ? <FileIcon /> : <GridIcon />}</SideIcon>
            {e.label}
          </SideLink>
        ),
      )}
    </SideNav>
  </Sidebar>
);

const RankingTable = () => (
  <Table>
    <colgroup>
      {columns.map(([, width], i) => (
        <col key={i} style={{ width: `${(width / TOTAL_WIDTH) * 100}%` }} />
      ))}
    </colgroup>
    <thead>
      <tr>
        {columns.map(([label], i) => (
          <HeadCell key={i}>
            <HeadLabel>
              {label}
              <SortIcon active={i === SORTED_COLUMN} />
            </HeadLabel>
          </HeadCell>
        ))}
      </tr>
    </thead>
    <tbody>
      {rows.map((row) => (
        <tr key={row[0]}>
          {row.map((value, i) => {
            const warn = i === RATIO_COLUMN && Number(value) > 2;
            return (
              <Cell key={i} $warn={warn}>
                <a href="#">{warn ? <del>{value}</del> : value}</a>
              </Cell>
            );
          })}
        </tr>
      ))}
    </tbody>
  </Table>
);

const DesktopPicture = () => (
  <Wallpaper preserveAspectRatio="none" viewBox="0 0 2880 190">
    <defs>
      <linearGradient id="wpL" x2="0" y2="1">
        <stop stopColor="#0c0d06" />
        <stop offset=".16" stopColor="#1c200a" />
        <stop offset=".28" stopColor="#5c4a1c" />
        <stop offset=".4" stopColor="#8a5a4c" />
        <stop offset=".62" stopColor="#7c5348" />
        <stop offset=".76" stopColor="#463a34" />
        <stop offset="1" stopColor="#664e46" />
      </linearGradient>
      <linearGradient id="wpR" x2="0" y2="1">
        <stop stopColor="#120c04" />
        <stop offset=".25" stopColor="#3c2a0a" />
        <stop offset=".5" stopColor="#93600f" />
        <stop offset=".8" stopColor="#c06c12" />
        <stop offset="1" stopColor="#8a4f12" />
      </linearGradient>
      <filter id="ripples" x="0" y="0" width="100%" height="100%">
        <feTurbulence type="fractalNoise" baseFrequency="0.025 0.32" numOctaves="3" seed="4" />
        <feColorMatrix values="0 0 0 0 0.05  0 0 0 0 0.03  0 0 0 0 0.01  2.6 0 0 0 -0.95" />
      </filter>
    </defs>
    <rect width="1440" height="190" fill="url(#wpL)" />
    <rect x="1440" width="1440" height="190" fill="url(#wpR)" />
    <rect width="200" height="190" filter="url(#ripples)" />
    <rect x="2700" width="180" height="190" filter="url(#ripples)" />
  </Wallpaper>
);

export default function App() {
  return (
    <Desktop>
      <GlobalStyle />
      <DesktopPicture />
      <SystemBar />
      <WindowStack>
        <BrowserWindow>
          <TabStrip>
            <TrafficLights>
              <Light $color="#ee6b60" $edge="#d5574d" aria-label="关闭窗口" />
              <Light $color="#f5bf4f" $edge="#d9a33c" aria-label="最小化" />
              <Light $color="#62c554" $edge="#4fa943" aria-label="缩放" />
            </TrafficLights>
            <BrowserTab title="股票基本面评价" active />
            <BrowserTab title="股票基本面评价" />
            <NewTab aria-label="新标签页">
              <MdAdd size={36} />
            </NewTab>
          </TabStrip>
          <Toolbar>
            <ToolGroup $gap={24}>
              <ToolButton aria-label="后退"><MdArrowBack size={40} /></ToolButton>
              <ToolButton aria-label="前进" $dim><MdArrowForward size={40} /></ToolButton>
              <ToolButton aria-label="刷新"><MdRefresh size={40} /></ToolButton>
            </ToolGroup>
            <Omnibox>
              <MdInfoOutline size={32} />
              <Address href="#">
                <b>127.0.0.1</b>:8000/index/evaluate/
              </Address>
              <MdStarBorder size={34} />
            </Omnibox>
            <ToolGroup $gap={22}>
              <ToolButton aria-label="用户"><MdAccountCircle size={44} /></ToolButton>
              <ToolButton aria-label="更多"><MdMoreVert size={40} /></ToolButton>
            </ToolGroup>
          </Toolbar>
          <Page>
            <SidebarMenu />
            <Content>
              <Box>
                <RankingTable />
              </Box>
            </Content>
          </Page>
        </BrowserWindow>
      </WindowStack>
      <DockArea>
        <DockShelf>
          <DockGroup apps={dockApps} />
          <DockDivider />
          <DockGroup apps={recentApps} />
          <DockDivider />
          <DockGroup apps={dockEnd} />
        </DockShelf>
      </DockArea>
    </Desktop>
  );
}
